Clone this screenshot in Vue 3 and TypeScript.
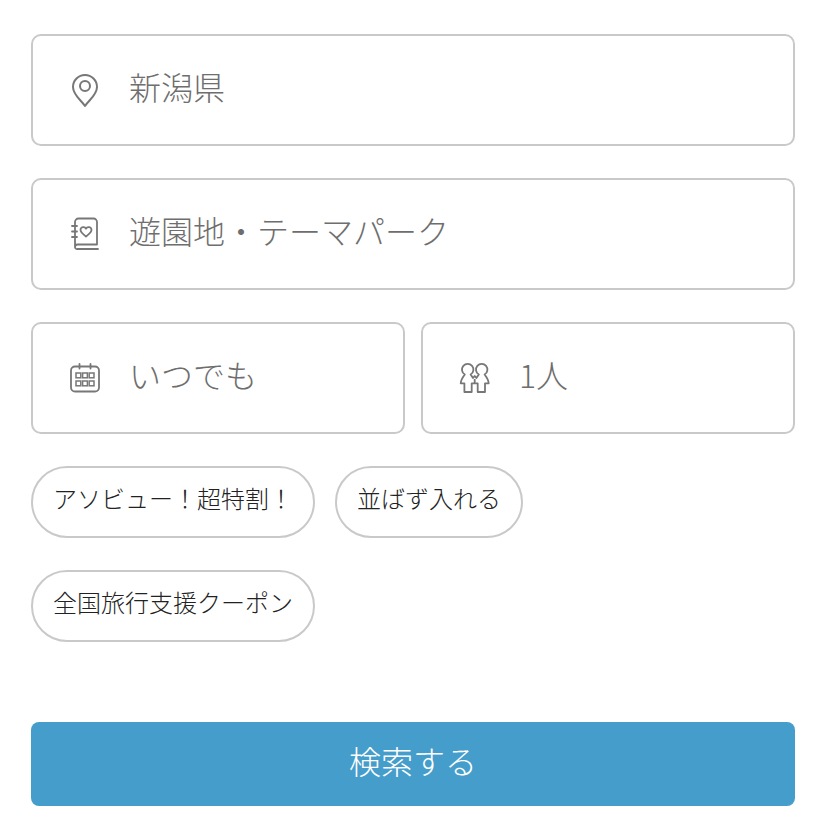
<script setup lang="ts">
const tags: string[][] = [['アソビュー！超特割！', '並ばず入れる'], ['全国旅行支援クーポン']]
</script>

<template>
  <main class="page">
    <div class="field">
      <svg class="icon" viewBox="0 0 32 36" width="32" height="36" fill="none" stroke="#777" stroke-width="2">
        <path d="M16 34 C12 28 4 23 4 15 A12 12 0 0 1 28 15 C28 23 20 28 16 34 Z" stroke-linejoin="round" />
        <circle cx="16" cy="14" r="5" />
      </svg>
      <span class="value">新潟県</span>
    </div>
    <div class="field">
      <svg class="icon" viewBox="0 0 32 36" width="32" height="36" fill="none" stroke="#777" stroke-width="1.8" stroke-linecap="round" stroke-linejoin="round">
        <path d="M6 6 A3.5 3.5 0 0 1 9.5 2.5 H24.5 A3.5 3.5 0 0 1 28 6 V28.5 H8.5 A2.5 2.5 0 0 0 6 31 V6 M8.5 33 H29 M6 31 A2 2 0 0 0 8.5 33" />
        <path d="M3 10 H8 M3 15.5 H8 M3 21 H8" />
        <path d="M17 20.5 C14 18 11.5 16.5 11.5 13.8 A2.9 2.9 0 0 1 17 12.7 A2.9 2.9 0 0 1 22.5 13.8 C22.5 16.5 20 18 17 20.5 Z" />
      </svg>
      <span class="value">遊園地・テーマパーク</span>
    </div>
    <div class="pair">
      <div class="field half">
        <svg class="icon" viewBox="0 0 32 36" width="32" height="36" fill="none" stroke="#777" stroke-width="1.8" stroke-linecap="round">
          <rect x="2" y="6.5" width="28" height="25" rx="4" />
          <path d="M10.5 4 V8.5 M21.5 4 V8.5" />
          <g stroke-width="1.5">
            <rect x="7" y="13" width="4.8" height="4.8" />
            <rect x="13.6" y="13" width="4.8" height="4.8" />
            <rect x="20.2" y="13" width="4.8" height="4.8" />
            <rect x="7" y="21" width="4.8" height="4.8" />
            <rect x="13.6" y="21" width="4.8" height="4.8" />
            <rect x="20.2" y="21" width="4.8" height="4.8" />
          </g>
        </svg>
        <span class="value">いつでも</span>
      </div>
      <div class="field half">
        <svg class="icon" viewBox="0 0 32 36" width="32" height="36" fill="none" stroke="#777" stroke-width="1.8" stroke-linejoin="round">
          <path d="M5.8 14.5 A5.7 5.7 0 1 1 11.6 14.5 L14 18 L15.7 16 L17.4 18 L19.8 14.5 A5.7 5.7 0 1 1 25.6 14.5 C27.5 17 29.5 20 29.7 23.3 H26 V32 H18.7 V23.3 H12.7 V32 H5.4 V23.3 H1.7 C1.9 20 3.9 17 5.8 14.5 Z" />
          <path d="M15.7 19 V23.3" />
        </svg>
        <span class="value">1人</span>
      </div>
    </div>
    <div v-for="(row, i) in tags" :key="i" class="tags">
      <span v-for="tag in row" :key="tag" class="tag">{{ tag }}</span>
    </div>
    <button class="search" type="button">検索する</button>
  </main>
</template>

<style scoped>
.page {
  box-sizing: border-box;
  width: 827px;
  height: 833px;
  padding: 34px 32px 0 31px;
  display: flex;
  flex-direction: column;
  font-family: "Noto Sans CJK JP", "Noto Sans", sans-serif;
  background: #fff;
}
.field {
  box-sizing: border-box;
  flex: none;
  height: 112px;
  margin-bottom: 32px;
  padding-left: 36px;
  display: flex;
  align-items: center;
  gap: 28px;
  border: 2px solid #c9c9c9;
  border-radius: 10px;
}
.half { flex: 1; }
.icon { flex: none; }
.value {
  font-size: 32px;
  font-weight: 300;
  color: #6e6e6e;
  line-height: 1;
  margin-top: -8px;
}
.pair { display: flex; gap: 16px; }
.tags {
  display: flex;
  gap: 20px;
  margin-bottom: 32px;
}
.tag {
  box-sizing: border-box;
  height: 72px;
  padding: 0 20px 10px 20px;
  display: flex;
  align-items: center;
  font-size: 24px;
  font-weight: 300;
  color: #222;
  border: 2px solid #c9c9c9;
  border-radius: 36px;
  white-space: nowrap;
}
.search {
  height: 84px;
  margin-top: 48px;
  padding-bottom: 10px;
  border: 0;
  border-radius: 8px;
  background: #459dcb;
  color: #fff;
  font: 300 32px "Noto Sans CJK JP", "Noto Sans", sans-serif;
}
</style>
